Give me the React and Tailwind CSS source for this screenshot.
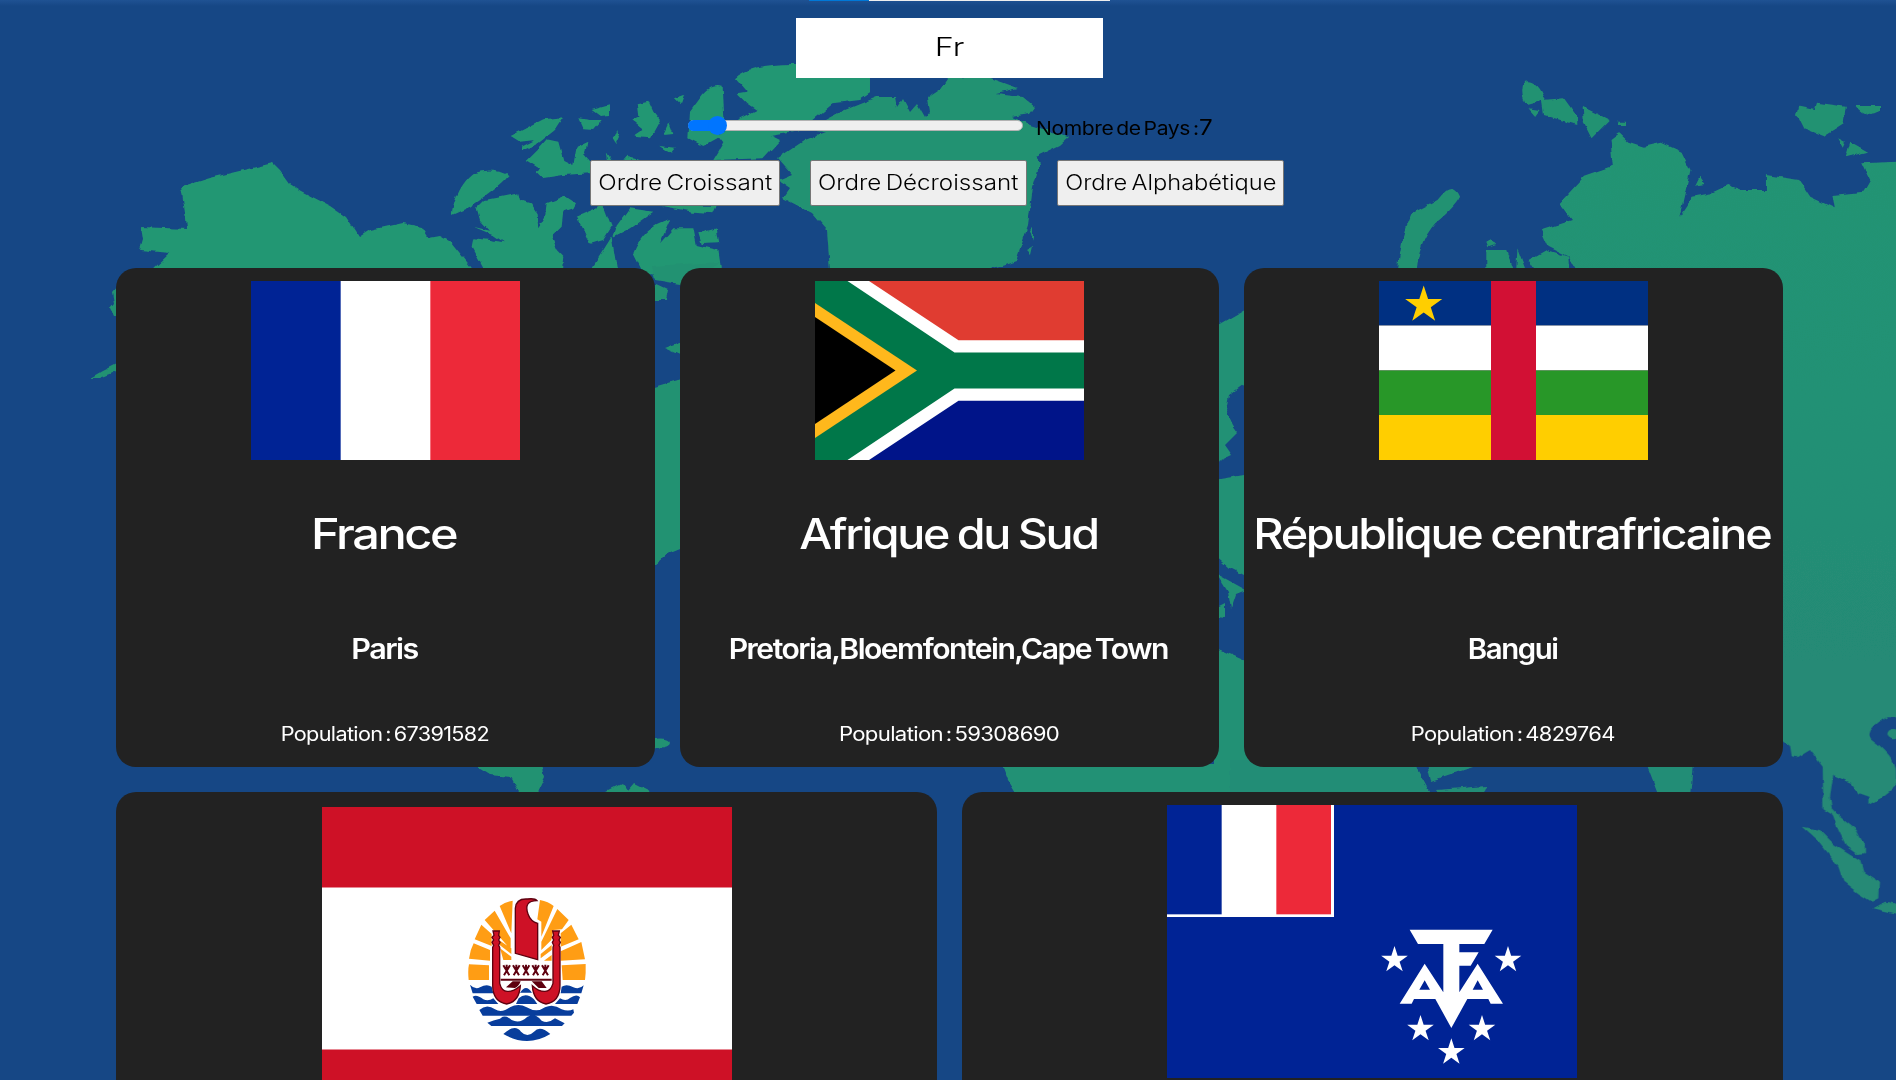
import React from "react";

const starPoints = (cx, cy, r) =>
  Array.from({ length: 10 }, (_, i) => {
    const a = -Math.PI / 2 + (i * Math.PI) / 5;
    const k = i % 2 ? r * 0.382 : r;
    return `${(cx + k * Math.cos(a)).toFixed(2)},${(cy + k * Math.sin(a)).toFixed(2)}`;
  }).join(" ");

function WorldMap() {
  return (
    <svg className="absolute inset-0 h-[1080px] w-[1896px]" viewBox="0 0 1896 1080" aria-hidden="true">
      <defs>
        <linearGradient id="land" gradientUnits="userSpaceOnUse" x1="0" y1="400" x2="0" y2="2000">
          <stop offset="0" stopColor="#239473" />
          <stop offset="0.5" stopColor="#239174" />
          <stop offset="1" stopColor="#258a76" />
        </linearGradient>
        <linearGradient id="edge" x1="0" y1="0" x2="0" y2="1">
          <stop offset="0" stopColor="#1f5293" />
          <stop offset="1" stopColor="#164785" />
        </linearGradient>
        <filter id="coast" filterUnits="userSpaceOnUse" x="-20" y="-20" width="1940" height="1120">
          <feTurbulence type="fractalNoise" baseFrequency="0.1" numOctaves="2" seed="4" result="n" />
          <feDisplacementMap in="SourceGraphic" in2="n" scale="5" xChannelSelector="R" yChannelSelector="G" />
          <feGaussianBlur stdDeviation="0.7" />
        </filter>
      </defs>
      <rect width="1896" height="1080" fill="#164785" />
      <rect width="1896" height="6" fill="url(#edge)" />
      <g filter="url(#coast)" fill="#239272">
        {/* Alaska and the western coast */}
        <path d="M181,187 210,178 273,163 280,170 290,184 301,191 330,206 346,217 359,237 370,230 402,223 422,227 429,238 440,236 451,242 475,272 150,272 170,253 140,250 143,240 141,227 187,229 186,218Z" fill="#239773" />
        <path d="M118,285 112,292 114,303 110,308 114,316 118,316ZM90,378 104,370 118,363 118,371 100,378Z" />
        {/* Arctic archipelago */}
        <g transform="translate(430 40) scale(0.33333)" fill="#239773">
          <path d="M130,560 180,572 150,540 140,505 165,480 215,470 265,460 270,480 300,490 320,520 325,565 345,530 350,490 375,480 405,468 438,490 430,505 400,515 395,560 365,590 380,630 400,650 395,694 165,694 125,620 130,595 180,600 222,607 190,585Z" />
          <path d="M64,526Q80,440 130,400Q190,380 236,408Q200,450 120,500Z" />
          <path d="M242,288 340,238 400,232 375,270 325,310 280,332 275,320 315,300 270,305ZM290,360 330,320 350,298 385,305 400,360 430,375 440,320 472,305 465,345 490,375 482,400 400,405 335,415 320,400 330,385Z" />
          <path d="M445,235 480,240 515,240 490,270 460,268ZM485,210 540,195 540,225 510,228ZM620,190 655,182 670,215 690,240 660,295 610,290 640,270 603,240 625,230ZM735,175l28,-10 -10,28zM715,250l12,32 -28,3zM550,300l12,-30 5,20 -10,22zM688,318l50,5 -15,18zM590,350l40,10 -50,2zM530,340l14,20 -10,0z" />
          <path d="M810,175Q840,130 875,140L880,235 870,290 820,318 775,295 780,215Z" />
          <path d="M915,115Q960,70 1100,72L1320,105 1320,160 1290,180 1210,190 1150,240 1110,270 1020,285 1050,300 1000,355 850,360 880,310 865,290 930,235 980,210 950,190 920,160 950,155Z" />
          <path d="M440,530 520,495 545,560 520,600 480,612ZM560,560 600,505 670,515 600,565 550,590ZM545,590 562,694 480,694ZM610,640Q640,560 720,540L690,610 730,565 790,565 800,615 865,630 875,700 640,700ZM805,580 860,565 868,610 815,612ZM690,497 860,497 850,520 790,515Z" />
        </g>
        {/* Greenland */}
        <path d="M778,158 805,140 826,132 806,130 840,112 877,97 895,97 897,108 903,99 910,112 917,104 925,118 930,112 928,98 940,90 948,78 985,76 1018,88 996,93 1022,96 1035,107 1030,114 1011,117 1030,125 1069,137 1060,145 1035,157 1040,163 1033,187 1028,225 1016,260 982,272 830,272 827,230 812,213 783,198 790,188 778,180 792,174Z" />
        <path d="M1030,230l3,-3 0,14zM1026,250l7,-4 -2,9z" />
        {/* Americas seen between the cards */}
        <path d="M652,266 720,262 712,268 680,284 655,280ZM655,284 668,290 666,300 655,300ZM664,348 682,341 682,356ZM650,388 685,378 685,547 668,554 650,568Z" />
        <path d="M650,743a9,4 0 1,0 20,0a9,4 0 1,0 -20,0ZM472,764 542,764 545,777 536,796 521,796 511,777 490,775ZM596,796 622,783 628,791 634,784 658,796Z" />
        {/* Europe and Africa seen between the cards */}
        <path d="M1217,326 1250,307 1250,380 1229,395 1226,410 1233,425 1238,432 1225,445 1232,455 1217,462ZM1214,480 1250,474 1250,578 1230,568 1214,554ZM1217,574 1246,590 1236,594 1231,609 1228,592ZM1217,608 1225,604 1225,618 1217,617ZM1214,647 1250,663 1250,800 1020,800 1008,780 1002,764 1214,764Z" fill="#239174" />
        <path d="M1230,760 1412,760 1434,800 1230,800ZM1427,764 1482,764 1431,781ZM1436,790 1487,786 1483,796 1440,796ZM1645,760 1693,764 1690,796 1659,796Z" fill="#248d76" />
        {/* Northern Russia and Arctic islands */}
        <g transform="translate(1200 0) scale(0.44387 0.33333)">
          <path d="M855,824 830,770 785,740 768,690 838,660 810,610 865,530 930,500 925,420 945,400 965,425 1000,440 1040,428 1085,455 1105,510 1080,650 1110,590 1150,580 1190,555 1220,570 1275,570 1275,525 1350,540 1375,590 1430,625 1425,585 1495,575 1510,540 1492,490 1620,482 1620,2000 1300,2000 1300,824Z" fill="url(#land)" />
          <path d="M445,824Q450,720 478,640L535,600Q570,540 586,590Q575,620 530,670Q490,730 488,824Z" />
          <path d="M730,245Q760,235 778,300L735,315Q720,280 730,245ZM770,300 820,295 850,350 850,375 775,345ZM862,320 923,360 882,415 865,370ZM940,365h22v10h-22ZM740,325 765,330 755,348ZM645,750 690,750 710,824 645,824ZM715,745 738,824 712,824ZM740,780 780,750 830,770 832,824 760,824ZM645,725 655,718 665,735 650,742ZM1350,320 1385,330 1390,308 1455,320 1450,370 1405,408 1360,385 1345,345ZM1475,315h57v22Q1500,360 1475,315ZM1465,425 1505,455 1455,472ZM1438,415l15,10 -5,15zM1125,530l12,22 -22,5z" />
        </g>
        {/* South-East Asia */}
        <g transform="translate(1780 680) scale(0.33333)" fill="#258a76">
          <path d="M-10,-60 400,-60 400,112 320,112Q255,150 272,175Q345,230 348,270L348,320 310,350 265,375 265,350 235,340 215,310 160,285 150,350 155,385 180,410 230,450 255,500 255,520 230,522 200,500 175,450 155,400 130,385 128,260 90,210 50,235 35,232 30,195 -10,165Z" />
          <path d="M65,440 120,450 160,490 240,540 250,575 297,605 295,655 275,665 235,640 190,605 175,560 110,480ZM280,685 315,665 380,675 380,708ZM322,162a20,16 0 1,0 40,0a20,16 0 1,0 -40,0Z" />
        </g>
      </g>
    </svg>
  );
}

function FlagFrance() {
  return (
    <svg className="h-[179px] w-[269px]" viewBox="0 0 3 2" preserveAspectRatio="none" role="img" aria-label="France">
      <rect width="3" height="2" fill="#fff" />
      <rect width="1" height="2" fill="#002395" />
      <rect x="2" width="1" height="2" fill="#ed2939" />
    </svg>
  );
}

function FlagSouthAfrica() {
  return (
    <svg className="h-[179px] w-[269px]" viewBox="0 0 269 179" role="img" aria-label="Afrique du Sud">
      <rect width="269" height="90" fill="#e03c31" />
      <rect y="89.5" width="269" height="89.5" fill="#001489" />
      <path d="M0,0H54L143.500,59.300H269V119.700H143.500L54,179H0Z" fill="#fff" />
      <path d="M0,0H32.500L139.500,71.500H269V107.500H139.500L32.500,179H0Z" fill="#007749" />
      <path d="M0,22 102,89.500 0,157Z" fill="#ffb81c" />
      <path d="M0,36 80.500,89.500 0,143Z" fill="#000" />
    </svg>
  );
}

function FlagCentralAfrica() {
  return (
    <svg className="h-[179px] w-[269px]" viewBox="0 0 269 179" role="img" aria-label="République centrafricaine">
      <rect width="269" height="44.500" fill="#003082" />
      <rect y="44.500" width="269" height="45" fill="#fff" />
      <rect y="89.500" width="269" height="45" fill="#289728" />
      <rect y="134" width="269" height="45" fill="#ffce00" />
      <rect x="112" width="45" height="179" fill="#d21034" />
      <polygon points={starPoints(44.7, 24, 19.5)} fill="#ffce00" />
    </svg>
  );
}

function FlagPolynesia() {
  return (
    <svg className="h-[273px] w-[410px]" viewBox="0 0 410 273" role="img" aria-label="Polynésie française">
      <rect width="410" height="273" fill="#ce1126" />
      <rect y="80.500" width="410" height="162" fill="#fff" />
      <g transform="translate(118 63) scale(0.33333)">
        <g fill="#ff9d14">
          <path d="M179,108Q198,95 218,92L214,190ZM134,150 164,122 212,205 212,240 200,225ZM104,208 124,164 155,192 155,228ZM87,266Q90,240 101,220L150,240 150,272ZM86,330Q83,300 87,283L147,286 147,330ZM180,235 214,260 214,270 190,270ZM180,212 214,235 214,252 180,226Z" />
          <path d="M300,90Q325,95 341,108L304,200 304,155 292,148ZM352,117 386,150 366,178 340,180 334,210 304,240 304,215ZM362,190 394,164 416,208 362,230ZM362,244 424,216 435,268 362,272ZM365,286 437,282Q438,310 435,330L368,330ZM302,252 335,225 335,240 302,265ZM312,272 335,255 335,272Z" />
        </g>
        <g fill="#083d9c">
          <path d="M90,344Q105,360 120,352Q140,340 155,350L160,370H98ZM365,350Q380,340 400,352Q418,360 431,346L424,370H362ZM240,368Q258,340 276,368Z" />
          <path d="M98,380Q110,372 130,388Q145,395 160,385L175,402H110ZM345,402 360,385Q378,395 390,384Q410,370 420,382L412,402ZM228,402 236,385Q258,365 282,388L292,402Z" />
          <path d="M118,420Q140,400 165,418Q185,430 210,412Q235,398 260,412Q290,430 315,412Q340,400 365,418Q385,425 400,418L402,428 394,437H128ZM142,458Q160,450 180,446Q195,432 215,450Q240,462 262,440Q290,430 305,452Q325,462 345,445L374,460 366,468H154Z" />
          <path d="M190,492Q225,460 243,485Q262,505 282,485Q300,465 331,492Q262,534 190,492Z" />
        </g>
        <path d="M226,250V115Q228,85 262,87Q285,84 291,92Q250,92 264,132Q272,155 293,160V269Z" fill="#ce1126" stroke="#5e000f" strokeWidth="4" />
        <g fill="none" stroke="#5e000f" strokeWidth="6">
          <path d="M190,286 208,316M210,286 192,316M200,284V304M219,286 237,316M239,286 221,316M229,284V304M248,286 266,316M268,286 250,316M258,284V304M277,286 295,316M297,286 279,316M287,284V304M306,286 324,316M326,286 308,316M316,284V304" />
          <path d="M182,329H335" />
        </g>
        <path d="M198,352 218,334H242Q236,350 225,354ZM275,334H305L320,354H296Z" fill="#5e000f" />
        <path d="M159,183H178L176,196 180,202 176,210 180,217 176,226 179,232V340Q185,364 202,364Q220,365 241,347Q238,395 200,402Q158,395 158,345V232L161,226 156,217 161,210 156,202 162,196Z" fill="#ce1126" stroke="#5e000f" strokeWidth="4" />
        <path d="M358,183H338L341,196 337,202 341,210 337,217 341,226 339,232V340Q332,364 315,364Q297,365 277,347Q280,395 318,402Q360,395 360,345V232L357,226 361,217 357,210 361,202 355,196Z" fill="#ce1126" stroke="#5e000f" strokeWidth="4" />
      </g>
    </svg>
  );
}

function FlagAustralLands() {
  return (
    <svg className="mr-px h-[273px] w-[410px]" viewBox="0 0 410 273" role="img" aria-label="Terres australes et antarctiques françaises">
      <rect width="410" height="273" fill="#002395" />
      <g transform="translate(-27 -25) scale(0.33333)" fill="#fff">
        <rect x="81" y="75" width="501" height="336" />
        <rect x="81" y="75" width="164" height="328" fill="#002395" />
        <rect x="409" y="75" width="164" height="328" fill="#ed2939" />
        <path fillRule="evenodd" d="M809,449H1058L1033,492H958V517H1016L992,557H958V637L1013,551 1089,671H1052L1045,657H982L934,744 886,657H822L815,671H779L854,551 910,637V492H834ZM854,601 838,629H870ZM1013,601 998,629H1029Z" />
        <polygon points={starPoints(763.5, 540, 42)} />
        <polygon points={starPoints(1104, 540, 42)} />
        <polygon points={starPoints(841.5, 747, 42)} />
        <polygon points={starPoints(1026, 747, 42)} />
        <polygon points={starPoints(934, 817, 42)} />
      </g>
    </svg>
  );
}

const countries = [
  {
    name: "France",
    capital: "Paris",
    population: 67391582,
    Flag: FlagFrance,
    nameStretch: "scale-x-[1.16]",
    capitalStretch: "scale-x-[1.09]",
    populationStretch: "scale-x-[1.11]",
  },
  {
    name: "Afrique du Sud",
    capital: "Pretoria,Bloemfontein,Cape Town",
    population: 59308690,
    Flag: FlagSouthAfrica,
    nameStretch: "scale-x-[1.11]",
    capitalStretch: "scale-x-[1.075]",
    populationStretch: "scale-x-[1.135]",
  },
  {
    name: "République centrafricaine",
    capital: "Bangui",
    population: 4829764,
    Flag: FlagCentralAfrica,
    nameStretch: "scale-x-[1.115]",
    capitalStretch: "scale-x-[1.05]",
    populationStretch: "scale-x-[1.125]",
  },
];

const sortButtons = [
  { label: "Ordre Croissant", width: "w-[190px]", stretch: "scale-x-[1.155]" },
  { label: "Ordre Décroissant", width: "w-[217px]", stretch: "scale-x-[1.15]" },
  { label: "Ordre Alphabétique", width: "w-[227px]", stretch: "scale-x-[1.125]" },
];

function CountryCard({ name, capital, population, Flag, nameStretch, capitalStretch, populationStretch }) {
  return (
    <article className="flex h-[499px] w-[539px] flex-col items-center rounded-[20px] bg-[#222] pt-[13px] text-white">
      <Flag />
      <h2 className={`mt-[49px] mr-[3px] h-[50px] text-[42px] leading-[50px] font-medium tracking-[-0.05em] whitespace-nowrap [word-spacing:-0.03em] ${nameStretch}`}>{name}</h2>
      <h3 className={`mt-[75px] mr-0.5 h-[30px] text-[28px] leading-[30px] font-semibold tracking-[-0.05em] whitespace-nowrap [word-spacing:-0.08em] ${capitalStretch}`}>{capital}</h3>
      <p className={`mt-[58px] mr-px h-6 text-[19.5px] leading-6 tracking-[-0.03em] whitespace-nowrap [word-spacing:-0.12em] ${populationStretch}`}>Population : {population}</p>
    </article>
  );
}

export default function App() {
  return (
    <div className="relative h-[1080px] w-[1896px] overflow-hidden bg-[#164785] font-['Inter',sans-serif]">
      <WorldMap />
      <main className="relative flex flex-col">
        <div className="ml-[809px] flex h-px w-[301px] bg-[#eee]">
          <div className="w-[60px] bg-[#0078d7]" />
        </div>
        <div className="mt-[17px] ml-[796px] flex h-[60px] w-[307px] items-center justify-center bg-white pb-0.5 text-[25.5px] font-light text-black">
          <span className="inline-block scale-x-[1.27]">Fr</span>
        </div>
        <div className="mt-[37px] ml-[688px] flex h-5 items-center">
          <div className="relative h-[11px] w-[335px] rounded-full border border-[#b2b2b2] bg-[#efefef]">
            <div className="absolute -top-px -left-px h-[11px] w-8 rounded-l-full bg-[#0075ff]" />
            <div className="absolute -top-[5px] left-[19px] size-[19px] rounded-full bg-[#0075ff]" />
          </div>
          <p className="mt-1 ml-[13px] flex items-baseline text-[18.5px] whitespace-nowrap text-black">
            <span className="w-[163px] origin-left scale-x-[1.14] tracking-[-0.02em] [word-spacing:-0.12em]">Nombre de Pays :</span>
            <span className="origin-left scale-x-[1.1] text-[22px]">7</span>
          </p>
        </div>
        <div className="mt-[25px] ml-[590px] flex gap-[30px] text-[21px] font-light text-black">
          {sortButtons.map(({ label, width, stretch }) => (
            <button key={label} className={`flex h-[46px] items-center justify-center rounded-[2px] border border-[#767676] bg-[#efefef] whitespace-nowrap ${width}`}>
              <span className={`[word-spacing:-0.1em] ${stretch}`}>{label}</span>
            </button>
          ))}
        </div>
        <section className="mt-[62px] ml-[116px] flex w-[1667px] flex-wrap gap-[25px]">
          {countries.map((country) => (
            <CountryCard key={country.name} {...country} />
          ))}
          <article className="flex h-[499px] w-[821px] flex-col items-center rounded-[20px] bg-[#222] pt-[15px]">
            <FlagPolynesia />
          </article>
          <article className="flex h-[499px] w-[821px] flex-col items-center rounded-[20px] bg-[#222] pt-[13px]">
            <FlagAustralLands />
          </article>
        </section>
      </main>
    </div>
  );
}
